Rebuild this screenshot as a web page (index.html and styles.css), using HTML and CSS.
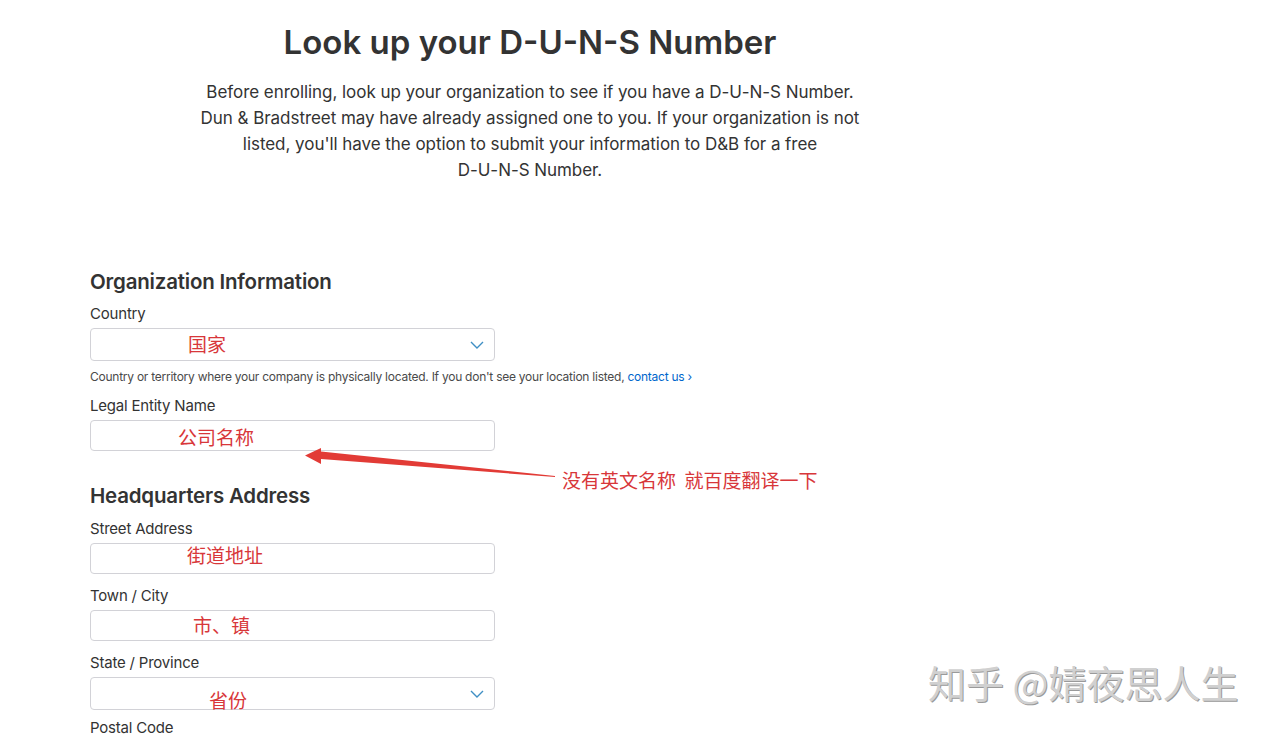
FILE: index.html
```html
<!DOCTYPE html>
<html lang="en">
<head>
  <meta charset="UTF-8" />
  <meta name="viewport" content="width=device-width, initial-scale=1.0"/>
  <title>Look up your D-U-N-S Number</title>
  <link rel="stylesheet" href="styles.css">
</head>
<body>
  <div class="page">
    <h1>Look up your D-U-N-S Number</h1>
    <p class="intro">
      Before enrolling, look up your organization to see if you have a D-U-N-S Number.<br>
      Dun &amp; Bradstreet may have already assigned one to you. If your organization is not<br>
      listed, you'll have the option to submit your information to D&amp;B for a free<br>
      D-U-N-S Number.
    </p>

    <form>
      <h2>Organization Information</h2>

      <div class="field">
        <label>Country</label>
        <div class="box select">
          <span class="note note-country">国家</span>
          <svg class="chevron" width="14" height="8" viewBox="0 0 14 8"><path d="M1 1l6 6 6-6" fill="none" stroke="#3f8fc4" stroke-width="1.4"/></svg>
        </div>
        <div class="help">Country or territory where your company is physically located. If you don't see your location listed, <a href="#">contact us ›</a></div>
      </div>

      <div class="field after-help">
        <label>Legal Entity Name</label>
        <div class="box">
          <span class="note note-legal">公司名称</span>
        </div>
      </div>

      <h2 class="second">Headquarters Address</h2>

      <div class="field">
        <label>Street Address</label>
        <div class="box">
          <span class="note note-street">街道地址</span>
        </div>
      </div>

      <div class="field">
        <label>Town / City</label>
        <div class="box">
          <span class="note note-town">市、镇</span>
        </div>
      </div>

      <div class="field">
        <label>State / Province</label>
        <div class="box select">
          <span class="note note-state">省份</span>
          <svg class="chevron" width="14" height="8" viewBox="0 0 14 8"><path d="M1 1l6 6 6-6" fill="none" stroke="#3f8fc4" stroke-width="1.4"/></svg>
        </div>
      </div>

      <div class="field last">
        <label>Postal Code</label>
      </div>
    </form>
  </div>

  <!-- anotações por cima da página -->
  <svg class="arrow" width="270" height="40" viewBox="0 0 270 40">
    <polygon points="9,15.5 25,8 25,11.5 259,36 259,37 25,19 25,24" fill="#e23b36"/>
  </svg>
  <div class="callout">没有英文名称&nbsp;&nbsp;就百度翻译一下</div>
  <div class="watermark">知乎 @婧夜思人生</div>
</body>
</html>
```

FILE: styles.css
```css
html, body {
  margin: 0;
  padding: 0;
  background-color: #ffffff;
  font-family: Inter, "Noto Sans", sans-serif;
  color: #333333;
}

.page {
  width: 880px;
  padding-left: 90px;
  height: 734px;
  overflow: hidden;
}

h1 {
  margin: 22px 0 0;
  font-size: 33px;
  line-height: 40px;
  font-weight: 600;
  text-align: center;
}

.intro {
  margin: 17px 0 0;
  font-size: 17px;
  line-height: 26px;
  text-align: center;
  letter-spacing: -0.05px;
}

form {
  width: 405px;
}

h2 {
  margin: 85px 0 0;
  font-size: 20.5px;
  line-height: 28px;
  font-weight: 600;
  letter-spacing: -0.2px;
}

h2.second {
  margin-top: 31px;
}

.field {
  margin-top: 12px;
}

.field.after-help {
  margin-top: 11px;
}

h2 + .field {
  margin-top: 8px;
}

h2.second + .field {
  margin-top: 9px;
}

.field.last {
  margin-top: 8px;
}

label {
  display: block;
  font-size: 15px;
  line-height: 20px;
  margin-bottom: 4px;
  letter-spacing: -0.2px;
}

.box {
  position: relative;
  height: 31px;
  border: 1px solid #d2d2d7;
  border-radius: 4px;
  box-sizing: border-box;
}

.box.select {
  height: 33px;
}

.chevron {
  position: absolute;
  right: 10px;
  top: 12px;
}

.help {
  margin-top: 8px;
  font-size: 12px;
  line-height: 16px;
  color: #4a4a4a;
  white-space: nowrap;
  letter-spacing: -0.25px;
}

.help a {
  color: #0066cc;
  text-decoration: none;
}

.note {
  position: absolute;
  font-family: "Noto Sans CJK SC", sans-serif;
  font-size: 19px;
  line-height: 24px;
  color: #d8373a;
}

.note-country { left: 97px; top: 3px; }
.note-legal { left: 87px; top: 4px; }
.note-street { left: 96px; top: -1px; }
.note-town { left: 102px; top: 2px; }
.note-state { left: 118px; top: 10px; }

.arrow {
  position: absolute;
  left: 296px;
  top: 440px;
}

.callout {
  position: absolute;
  left: 562px;
  top: 468px;
  font-family: "Noto Sans CJK SC", sans-serif;
  font-size: 19px;
  line-height: 24px;
  color: #d8373a;
}

.watermark {
  position: absolute;
  left: 928px;
  top: 657px;
  font-family: "Noto Sans CJK SC", sans-serif;
  font-size: 38px;
  line-height: 50px;
  color: #d0d0d0;
  text-shadow: 1px 1px 0 #9a9a9a;
}
```
